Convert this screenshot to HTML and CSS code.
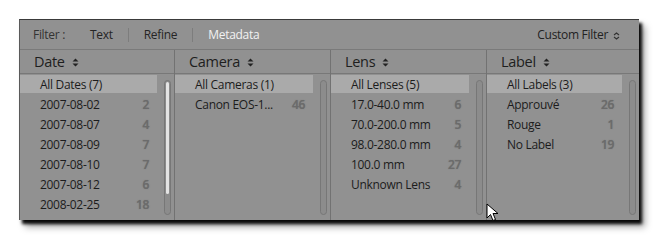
FILE: index.html
```html
<!DOCTYPE html>
<html lang="en">
<head>
    <meta charset="UTF-8">
    <title>Library Filter</title>
    <link rel="stylesheet" href="styles.css">
</head>
<body>

    <div class="panel">
        <!-- Filter bar -->
        <div class="filter-bar">
            <span class="filter-label">Filter :</span>
            <span class="tab">Text</span>
            <span class="sep"></span>
            <span class="tab">Refine</span>
            <span class="sep"></span>
            <span class="tab active">Metadata</span>
            <span class="custom">Custom Filter
                <svg class="custom-icon" width="7" height="8" viewBox="0 0 7 8"><path d="M1 3 L3.5 1 L6 3 M1 5 L3.5 7 L6 5" fill="none" stroke="#333" stroke-width="1.1"/></svg>
            </span>
        </div>

        <!-- Columns -->
        <div class="columns">
            <div class="col">
                <div class="col-head">Date <svg class="sort" width="7" height="9" viewBox="0 0 7 9"><path d="M0.5 3.5 L3.5 0.5 L6.5 3.5 Z M0.5 5.5 L3.5 8.5 L6.5 5.5 Z" fill="#222"/></svg></div>
                <div class="col-body">
                    <ul class="list">
                        <li class="sel"><span>All Dates (7)</span></li>
                        <li><span>2007-08-02</span><span class="count">2</span></li>
                        <li><span>2007-08-07</span><span class="count">4</span></li>
                        <li><span>2007-08-09</span><span class="count">7</span></li>
                        <li><span>2007-08-10</span><span class="count">7</span></li>
                        <li><span>2007-08-12</span><span class="count">6</span></li>
                        <li><span>2008-02-25</span><span class="count">18</span></li>
                    </ul>
                    <div class="scroll"><div class="thumb"></div></div>
                </div>
            </div>
            <div class="col">
                <div class="col-head">Camera <svg class="sort" width="7" height="9" viewBox="0 0 7 9"><path d="M0.5 3.5 L3.5 0.5 L6.5 3.5 Z M0.5 5.5 L3.5 8.5 L6.5 5.5 Z" fill="#222"/></svg></div>
                <div class="col-body">
                    <ul class="list">
                        <li class="sel"><span>All Cameras (1)</span></li>
                        <li><span>Canon EOS-1...</span><span class="count">46</span></li>
                    </ul>
                    <div class="scroll"></div>
                </div>
            </div>
            <div class="col">
                <div class="col-head">Lens <svg class="sort" width="7" height="9" viewBox="0 0 7 9"><path d="M0.5 3.5 L3.5 0.5 L6.5 3.5 Z M0.5 5.5 L3.5 8.5 L6.5 5.5 Z" fill="#222"/></svg></div>
                <div class="col-body">
                    <ul class="list">
                        <li class="sel"><span>All Lenses (5)</span></li>
                        <li><span>17.0-40.0 mm</span><span class="count">6</span></li>
                        <li><span>70.0-200.0 mm</span><span class="count">5</span></li>
                        <li><span>98.0-280.0 mm</span><span class="count">4</span></li>
                        <li><span>100.0 mm</span><span class="count">27</span></li>
                        <li><span>Unknown Lens</span><span class="count">4</span></li>
                    </ul>
                    <div class="scroll"></div>
                </div>
            </div>
            <div class="col last">
                <div class="col-head">Label <svg class="sort" width="7" height="9" viewBox="0 0 7 9"><path d="M0.5 3.5 L3.5 0.5 L6.5 3.5 Z M0.5 5.5 L3.5 8.5 L6.5 5.5 Z" fill="#222"/></svg></div>
                <div class="col-body">
                    <ul class="list">
                        <li class="sel"><span>All Labels (3)</span></li>
                        <li><span>Approuvé</span><span class="count">26</span></li>
                        <li><span>Rouge</span><span class="count">1</span></li>
                        <li><span>No Label</span><span class="count">19</span></li>
                    </ul>
                    <div class="scroll"></div>
                </div>
            </div>
        </div>
    </div>

    <!-- mouse pointer -->
    <svg class="cursor" width="14" height="20" viewBox="0 0 14 20">
        <path d="M1 1 L1 15 L4.5 11.5 L7 17.5 L9.5 16.5 L7 10.5 L12 10.5 Z" fill="#fff" stroke="#000" stroke-width="1"/>
    </svg>

</body>
</html>
```

FILE: styles.css
```css
body {
    margin: 0;
    background-color: #fff;
    font-family: "Open Sans", "Noto Sans", sans-serif;
    position: relative;
    width: 659px;
    height: 240px;
    overflow: hidden;
}
.panel {
    margin: 19px 0 0 19px;
    width: 620px;
    height: 201px;
    background-color: #919191;
    border-top: 1px solid #3a3a3a;
    border-left: 1px solid #5a5a5a;
    box-sizing: border-box;
    box-shadow: 3px 4px 3px rgba(0, 0, 0, 0.95), 6px 7px 7px rgba(0, 0, 0, 0.35);
    display: flex;
    flex-direction: column;
}
.filter-bar {
    height: 29px;
    display: flex;
    align-items: center;
    font-size: 12px;
    letter-spacing: -0.3px;
    color: #2a2a2a;
    border-bottom: 1px solid #7a7a7a;
    padding-left: 13px;
    padding-right: 19px;
}
.filter-label {
    margin-right: 25px;
    color: #333;
}
.tab {
    color: #252525;
}
.tab.active {
    color: #f2f2f2;
}
.sep {
    width: 1px;
    height: 14px;
    background-color: #7d7d7d;
    margin: 0 15px;
}
.custom {
    margin-left: auto;
    display: flex;
    align-items: center;
    color: #222;
}
.custom-icon {
    margin-left: 5px;
    margin-top: 2px;
}
.columns {
    flex: 1;
    display: flex;
    min-height: 0;
}
.col {
    width: 156px;
    display: flex;
    flex-direction: column;
    border-right: 1px solid #727272;
    box-sizing: border-box;
}
.col:first-child {
    width: 155px;
}
.col.last {
    flex: 1;
    border-right: none;
}
.col-head {
    height: 23px;
    border-bottom: 1px solid #787878;
    display: flex;
    align-items: center;
    padding-left: 14px;
    font-size: 14.5px;
    letter-spacing: -0.3px;
    color: #1e1e1e;
}
.sort {
    margin-left: 7px;
    margin-top: 1px;
}
.col-body {
    flex: 1;
    display: flex;
    min-height: 0;
}
.list {
    flex: 1;
    list-style: none;
    margin: 0;
    padding: 1px 0 0 0;
}
.list li {
    height: 18px;
    margin-bottom: 2px;
    display: flex;
    align-items: center;
    justify-content: space-between;
    padding: 0 8px 0 20px;
    font-size: 12px;
    letter-spacing: -0.3px;
    color: #1c1c1c;
}
.list li.sel {
    background-color: #aaaaaa;
}
.count {
    color: #6b6b6b;
    font-weight: 600;
    text-shadow: 0 0 1px rgba(90, 90, 90, 0.6);
}
.scroll {
    width: 5px;
    margin: 6px 3px 5px 7px;
    border: 1px solid #777;
    border-radius: 4px;
    background-color: #8c8c8c;
}
.thumb {
    margin: 1px;
    height: 112px;
    border-radius: 3px;
    background-color: #e4e4e4;
}
.cursor {
    position: absolute;
    left: 486px;
    top: 203px;
}
```
